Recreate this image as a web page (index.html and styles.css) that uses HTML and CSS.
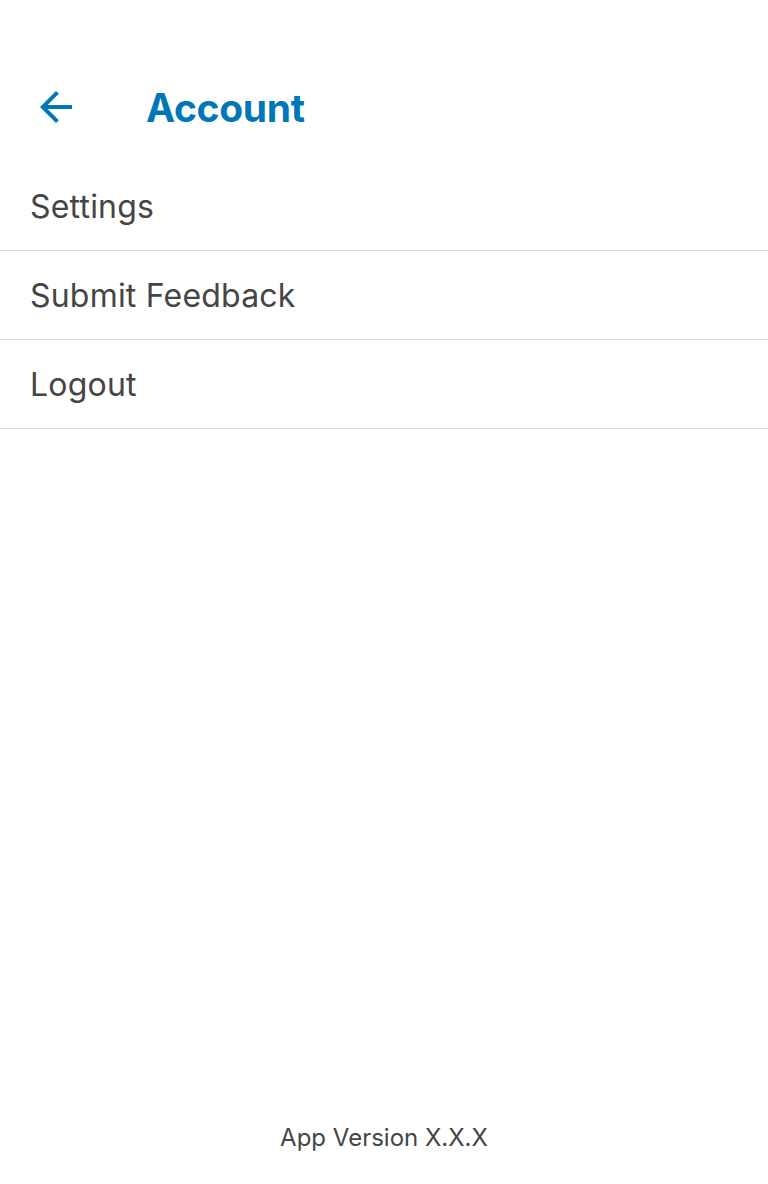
FILE: index.html
```html
<!DOCTYPE html>
<html>
<head>
<meta charset="utf-8">
<link rel="stylesheet" href="styles.css">
</head>
<body>
<div class="screen">
  <header class="topbar">
    <button class="back" aria-label="Back">
      <svg viewBox="0 0 24 24" width="48" height="48"><path fill="currentColor" d="M20 11H7.83l5.59-5.59L12 4l-8 8 8 8 1.41-1.41L7.83 13H20v-2z"/></svg>
    </button>
    <h1 class="title">Account</h1>
  </header>
  <ul class="menu">
    <li class="item">Settings</li>
    <li class="item">Submit Feedback</li>
    <li class="item">Logout</li>
  </ul>
  <footer class="version">App Version X.X.X</footer>
</div>
</body>
</html>
```
FILE: styles.css
```css
html, body {
  margin: 0;
  padding: 0;
  background: #fff;
}
body {
  font-family: Inter, "Noto Sans", sans-serif;
  color: #454545;
}
.screen {
  height: 1184px;
  display: flex;
  flex-direction: column;
}
.topbar {
  display: flex;
  align-items: center;
  height: 90px;
  margin-top: 62px;
  padding-left: 32px;
}
.back {
  width: 48px;
  height: 48px;
  padding: 0;
  border: 0;
  background: none;
  color: #0077b6;
  display: flex;
}
.title {
  margin: 0 0 0 66px;
  font-size: 39px;
  font-weight: 700;
  color: #0077b6;
  letter-spacing: -0.3px;
}
.menu {
  list-style: none;
  margin: 10px 0 0;
  padding: 0;
}
.item {
  height: 88px;
  display: flex;
  align-items: center;
  padding-left: 30px;
  font-size: 32px;
  font-weight: 370;
  letter-spacing: 0.2px;
  border-bottom: 1px solid #d9d9d9;
}
.version {
  margin-top: auto;
  margin-bottom: 32px;
  text-align: center;
  font-size: 24px;
  font-weight: 370;
  letter-spacing: 0;
}
```
